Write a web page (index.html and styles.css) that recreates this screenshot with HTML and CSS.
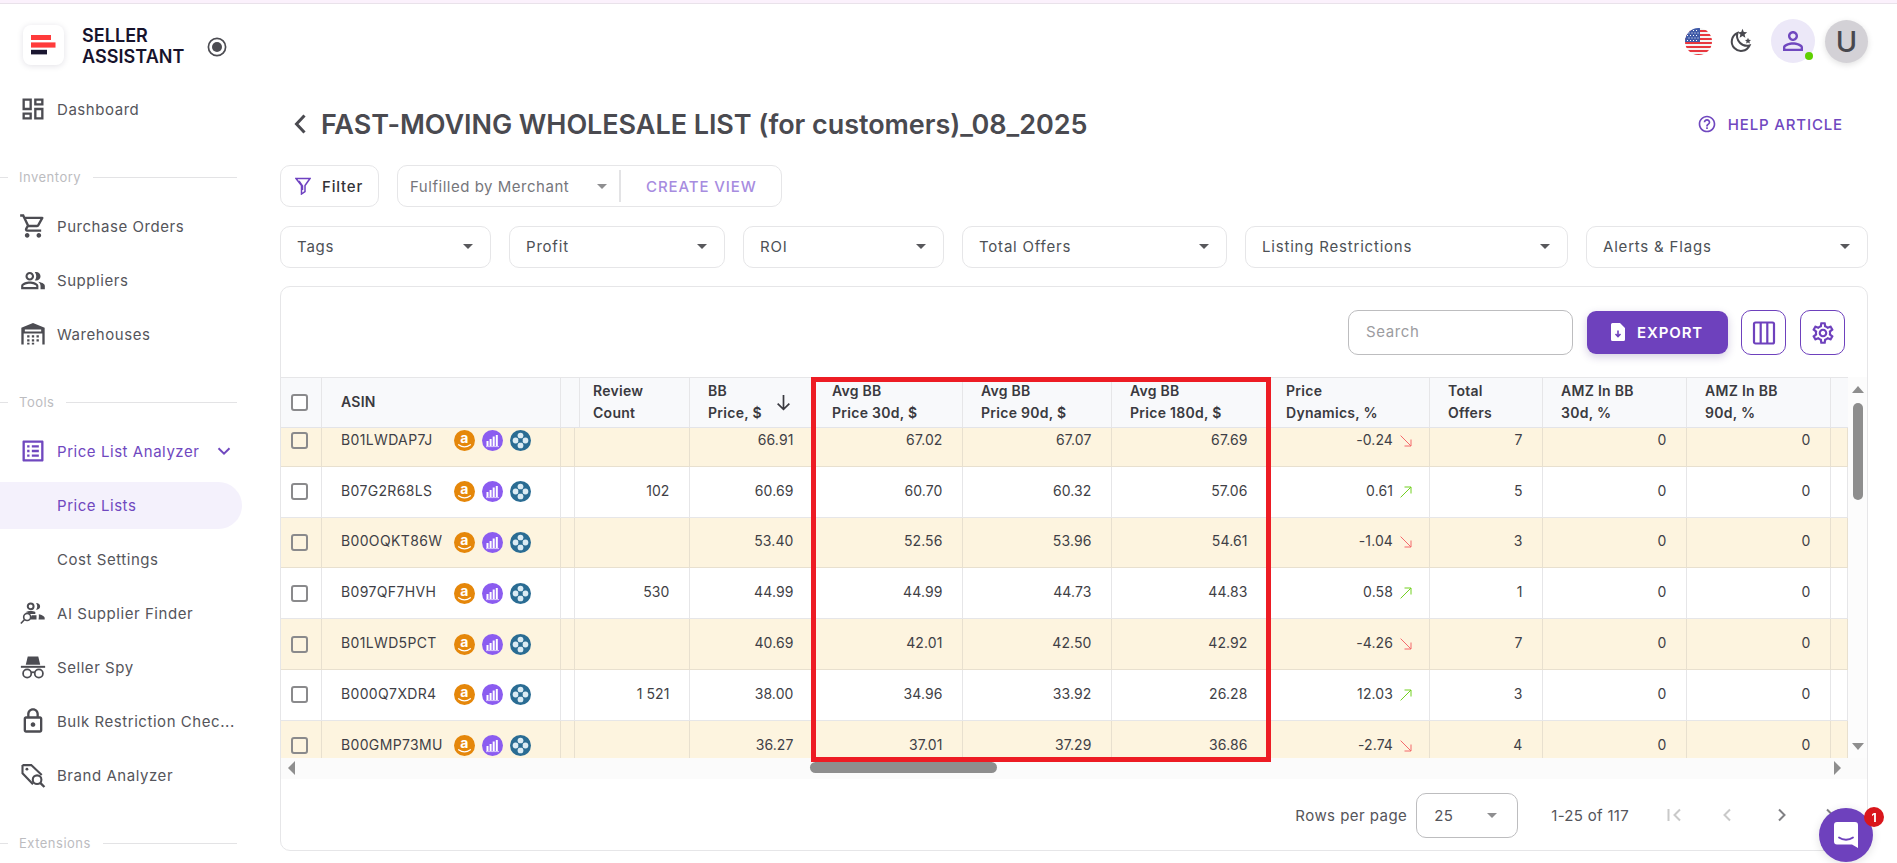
FILE: index.html
```html
<!DOCTYPE html>
<html lang="en">
<head>
<meta charset="utf-8">
<title>Seller Assistant</title>
<link rel="stylesheet" href="styles.css">
</head>
<body>
<svg class="defs" width="0" height="0">
  <symbol id="i-amz" viewBox="0 0 21 21"><circle cx="10.5" cy="10.5" r="10.5" fill="#e5870a"/><text x="10.5" y="12.8" text-anchor="middle" class="amz-a">a</text><path d="M4.6 14.8c3.6 2.6 8.2 2.6 11.8 0" fill="none" stroke="#fff" stroke-width="1.3" stroke-linecap="round"/></symbol>
  <symbol id="i-bars" viewBox="0 0 21 21"><circle cx="10.5" cy="10.5" r="10.5" fill="#8b5cf0"/><path d="M5.5 11v5M8.6 9v7M11.7 6.5V16M14.8 5v11" stroke="#fff" stroke-width="2" fill="none"/><path d="M4 16.6h13" stroke="#d9c9fb" stroke-width="1"/></symbol>
  <symbol id="i-keepa" viewBox="0 0 21 21"><circle cx="10.5" cy="10.5" r="10.5" fill="#2a6c93"/><circle cx="10.5" cy="5.6" r="2.9" fill="#dcecf4"/><circle cx="10.5" cy="15.4" r="2.9" fill="#dcecf4"/><circle cx="5.6" cy="10.5" r="2.9" fill="#dcecf4"/><circle cx="15.4" cy="10.5" r="2.9" fill="#dcecf4"/><circle cx="10.5" cy="10.5" r="2" fill="#2a6c93"/></symbol>
  <symbol id="i-down" viewBox="0 0 12 12"><path d="M.6 .6 11 11M11 4.5V11H4.5" fill="none" stroke="#f4696b" stroke-width="1"/></symbol>
  <symbol id="i-up" viewBox="0 0 12 12"><path d="M.6 11.4 11 1M4.5 1H11v6.5" fill="none" stroke="#72d020" stroke-width="1"/></symbol>
</svg>

<div class="strip"></div>
<div class="app">
  <aside class="sidebar">
    <div class="brand">
      <div class="logo">
        <svg width="41" height="40" viewBox="0 0 41 40"><rect x="8" y="10" width="20" height="5" fill="#ff3b3b"/><rect x="8" y="17.4" width="24.5" height="5.2" fill="#ff3b3b"/><rect x="8" y="24.8" width="16" height="4.6" fill="#1a1630"/></svg>
      </div>
      <div class="brand-name">SELLER<br>ASSISTANT</div>
      <svg class="brand-radio" width="20" height="20" viewBox="0 0 20 20"><circle cx="10" cy="10" r="8.6" fill="none" stroke="#4c4c52" stroke-width="1.7"/><circle cx="10" cy="10" r="5" fill="#4c4c52"/></svg>
    </div>

    <nav class="nav">
      <a class="item"><svg class="ic" viewBox="0 0 24 24"><path d="M19 5v2h-4V5h4M9 5v6H5V5h4m10 8v6h-4v-6h4M9 17v2H5v-2h4M21 3h-8v6h8V3zM11 3H3v10h8V3zm10 8h-8v10h8V11zm-10 4H3v6h8v-6z"/></svg><span>Dashboard</span></a>

      <div class="section"><span>Inventory</span></div>
      <a class="item"><svg class="ic" viewBox="0 0 24 24"><path d="M15.55 13c.75 0 1.41-.41 1.75-1.03l3.58-6.49c.37-.66-.11-1.48-.87-1.48H5.21l-.94-2H1v2h2l3.6 7.59-1.35 2.44C4.52 15.37 5.48 17 7 17h12v-2H7l1.1-2h7.45zM6.16 6h12.15l-2.76 5H8.53L6.16 6zM7 18c-1.1 0-1.99.9-1.99 2S5.9 22 7 22s2-.9 2-2-.9-2-2-2zm10 0c-1.1 0-1.99.9-1.99 2s.89 2 1.99 2 2-.9 2-2-.9-2-2-2z"/></svg><span>Purchase Orders</span></a>
      <a class="item"><svg class="ic" viewBox="-1 -1.5 26 26"><path d="M16.67 13.13C18.04 14.06 19 15.32 19 17v3h4v-3c0-2.18-3.57-3.47-6.33-3.87zM15 12c2.21 0 4-1.79 4-4s-1.79-4-4-4c-.47 0-.91.1-1.33.24C14.5 5.27 15 6.58 15 8s-.5 2.73-1.33 3.76c.42.14.86.24 1.33.24zM9 12c2.21 0 4-1.79 4-4s-1.79-4-4-4-4 1.79-4 4 1.79 4 4 4zm0-6c1.1 0 2 .9 2 2s-.9 2-2 2-2-.9-2-2 .9-2 2-2zM9 13c-2.67 0-8 1.34-8 4v3h16v-3c0-2.66-5.33-4-8-4zm6 5H3v-.99C3.2 16.29 6.3 15 9 15s5.8 1.29 6 2v1z"/></svg><span>Suppliers</span></a>
      <a class="item"><svg class="ic" viewBox="0 0 24 24"><path fill-rule="evenodd" d="M12 2.6 2 6.6V21h2V11.5h16V21h2V6.6zM5 8.2h14v1.6H5z"/><path d="M7 13h2v2H7zm4 0h2v2h-2zm4 0h2v2h-2zM7 16.5h2v2H7zm4 0h2v2h-2zm4 0h2v2h-2zM7 19.6h2V21H7zm4 0h2V21h-2z"/></svg><span>Warehouses</span></a>

      <div class="section"><span>Tools</span></div>
      <a class="item active"><svg class="ic" viewBox="0 0 24 24"><path d="M11 7h6v2h-6zm0 4h6v2h-6zm0 4h6v2h-6zM7 7h2v2H7zm0 4h2v2H7zm0 4h2v2H7zM20.1 3H3.9c-.5 0-.9.4-.9.9v16.2c0 .4.4.9.9.9h16.2c.4 0 .9-.5.9-.9V3.9c0-.5-.5-.9-.9-.9zM19 19H5V5h14v14z"/></svg><span>Price List Analyzer</span><svg class="chev" width="16" height="16" viewBox="0 0 16 16"><path d="M2.5 5.2 8 10.6l5.5-5.4" fill="none" stroke="#7048bf" stroke-width="2"/></svg></a>
      <a class="item sub current"><span>Price Lists</span></a>
      <a class="item sub"><span>Cost Settings</span></a>
      <a class="item"><svg class="ic" viewBox="0 0 24 24"><circle cx="10" cy="6.3" r="2.5" fill="none" stroke="#4c4c52" stroke-width="1.7"/><path d="M14.5 3.5c2.4 0 3.6 1.4 3.6 2.9s-1.2 2.9-3.6 2.9c.8-1 1.1-1.9 1.1-2.9s-.3-1.900-1.100-2.900z"/><circle cx="7" cy="15.4" r="3" fill="none" stroke="#4c4c52" stroke-width="1.4"/><path d="M4.800 17.600 1.600 21" fill="none" stroke="#4c4c52" stroke-width="1.400"/><path d="M5.500 11.300c1.300-.7 3-1 4.500-1s3 .3 4 .9v1.600h-5c-.7-.9-2.200-1.500-3.500-1.500zM11 14h4v3.600h-5.200c.4-1.200.4-2.400 1.200-3.600zM17 13c2.500.5 5 1.700 5 3.200v1.400h-5.200c.3-1.600.3-3.200.2-4.600z"/></svg><span>AI Supplier Finder</span></a>
      <a class="item"><svg class="ic" viewBox="0 0 24 24"><path d="M7.500 3h9l1.700 7H5.800z"/><path d="M1.600 11h20.800v1.700H1.600z"/><circle cx="7" cy="17.500" r="3.500" fill="none" stroke="#4c4c52" stroke-width="1.500"/><circle cx="17" cy="17.500" r="3.500" fill="none" stroke="#4c4c52" stroke-width="1.500"/><path d="M10.500 16.500h3" fill="none" stroke="#4c4c52" stroke-width="1.500"/></svg><span>Seller Spy</span></a>
      <a class="item"><svg class="ic" viewBox="0 0 24 24"><path d="M18 8h-1V6c0-2.760-2.240-5-5-5S7 3.240 7 6v2H6c-1.100 0-2 .9-2 2v10c0 1.100.9 2 2 2h12c1.100 0 2-.9 2-2V10c0-1.100-.9-2-2-2zM9 6c0-1.660 1.340-3 3-3s3 1.340 3 3v2H9zm9 14H6V10h12v10zm-6-3c1.100 0 2-.9 2-2s-.9-2-2-2-2 .9-2 2 .9 2 2 2z"/></svg><span>Bulk Restriction Chec...</span></a>
      <a class="item"><svg class="ic" viewBox="0 0 24 24"><path d="M3 3.500h7.500l9 8.500" fill="none" stroke="#4c4c52" stroke-width="1.800"/><path d="M3 3.500v7l9 9.500" fill="none" stroke="#4c4c52" stroke-width="1.800"/><circle cx="6.800" cy="7" r="1.200"/><circle cx="15.500" cy="16" r="3.700" fill="none" stroke="#4c4c52" stroke-width="1.800"/><path d="m18.200 18.700 3.600 3.600" fill="none" stroke="#4c4c52" stroke-width="2"/></svg><span>Brand Analyzer</span></a>

      <div class="section"><span>Extensions</span></div>
    </nav>
  </aside>

  <main class="main">
    <header class="topbar">
      <svg class="flag" width="27" height="27" viewBox="0 0 27 27">
        <defs><clipPath id="flagclip"><circle cx="13.500" cy="13.500" r="13.500"/></clipPath></defs>
        <g clip-path="url(#flagclip)">
          <rect width="27" height="27" fill="#f4f4f4"/>
          <path d="M0 2h27v2H0zM0 6h27v2H0zM0 10h27v2H0zM0 14h27v2H0zM0 18h27v2H0zM0 22h27v2H0zM0 26h27v2H0z" fill="#e8373e"/>
          <rect width="15" height="14" fill="#3f5aa8"/>
          <path d="M2 2.500h1M5 2.500h1M8 2.500h1M11 2.500h1M3.500 5h1M6.500 5h1M9.500 5h1M12.500 5h1M2 7.500h1M5 7.500h1M8 7.500h1M11 7.500h1M3.500 10h1M6.500 10h1M9.500 10h1M12.500 10h1M2 12.500h1M5 12.500h1M8 12.500h1M11 12.500h1" stroke="#fff" stroke-width="1"/>
        </g>
      </svg>
      <svg class="moon" width="26" height="26" viewBox="0 0 26 26"><path d="M10.500 5A9.300 9.300 0 1 0 22.500 17.500 10 10 0 0 1 10.500 5z" fill="none" stroke="#48484e" stroke-width="2"/><path d="m15.500 .8 1.300 3.200 3.400.3-2.600 2.200.8 3.300-2.900-1.800-2.900 1.800.8-3.300-2.600-2.200 3.400-.3z" fill="#48484e"/><path d="m21 9.800.9 2 2.100.2-1.600 1.400.5 2.100-1.900-1.100-1.900 1.100.5-2.100-1.600-1.400 2.100-.2z" fill="#48484e"/></svg>
      <div class="user">
        <svg width="30" height="30" viewBox="0 0 24 24"><path fill="#7048bf" d="M12 5.900c1.160 0 2.100.94 2.100 2.100s-.94 2.100-2.100 2.100S9.900 9.160 9.900 8s.94-2.100 2.100-2.100m0 9c2.970 0 6.100 1.460 6.100 2.100v1.100H5.900V17c0-.64 3.130-2.100 6.100-2.100M12 4C9.790 4 8 5.790 8 8s1.790 4 4 4 4-1.790 4-4-1.790-4-4-4zm0 9c-2.670 0-8 1.340-8 4v3h16v-3c0-2.660-5.330-4-8-4z"/></svg>
        <span class="dot"></span>
      </div>
      <div class="avatar">U</div>
    </header>

    <div class="title-row">
      <svg class="back" width="14" height="22" viewBox="0 0 14 22"><path d="M11.500 2.500 3.500 11l8 8.500" fill="none" stroke="#4a4a50" stroke-width="3"/></svg>
      <h1 class="title">FAST-MOVING WHOLESALE LIST (for customers)_08_2025</h1>
      <a class="help"><svg width="20" height="20" viewBox="0 0 24 24"><path fill="#7048bf" d="M11 18h2v-2h-2v2zm1-16C6.480 2 2 6.480 2 12s4.480 10 10 10 10-4.480 10-10S17.520 2 12 2zm0 18c-4.410 0-8-3.590-8-8s3.590-8 8-8 8 3.590 8 8-3.590 8-8 8zm0-14c-2.210 0-4 1.790-4 4h2c0-1.100.9-2 2-2s2 .9 2 2c0 2-3 1.750-3 5h2c0-2.250 3-2.500 3-5 0-2.210-1.790-4-4-4z"/></svg><span>HELP ARTICLE</span></a>
    </div>

    <div class="views">
      <button class="filter-btn"><svg width="16" height="18" viewBox="0 0 16 18"><path d="M1 1.500h14L10 8.500V14.500L6.500 17V8.500z M4 4l3.500 5v4" fill="none" stroke="#6f42c1" stroke-width="1.500"/></svg><span>Filter</span></button>
      <div class="view-group">
        <span class="view-name">Fulfilled by Merchant</span>
        <i class="caret caret-soft"></i>
        <i class="view-divider"></i>
        <span class="create">CREATE VIEW</span>
      </div>
    </div>

    <div class="filters">
      <div class="dd"><span>Tags</span><i class="caret"></i></div>
      <div class="dd"><span>Profit</span><i class="caret"></i></div>
      <div class="dd"><span>ROI</span><i class="caret"></i></div>
      <div class="dd"><span>Total Offers</span><i class="caret"></i></div>
      <div class="dd"><span>Listing Restrictions</span><i class="caret"></i></div>
      <div class="dd"><span>Alerts &amp; Flags</span><i class="caret"></i></div>
    </div>

    <section class="card">
      <div class="toolbar">
        <div class="search">Search</div>
        <button class="export"><svg width="14" height="18" viewBox="0 0 14 18"><path d="M1.500 0H9l5 5v11.500a1.500 1.500 0 0 1-1.500 1.500h-11A1.500 1.500 0 0 1 0 16.500v-15A1.500 1.500 0 0 1 1.500 0z" fill="#fff"/><path d="M7 7.500v6M4.500 11 7 13.500 9.500 11" fill="none" stroke="#6e41bd" stroke-width="1.600"/></svg><span>EXPORT</span></button>
        <button class="square"><svg width="24" height="26" viewBox="0 0 24 26"><rect x="2" y="2.500" width="20" height="21" rx="1.500" fill="none" stroke="#6e41bd" stroke-width="2.200"/><path d="M8.700 3v20M15.300 3v20" stroke="#6e41bd" stroke-width="2.200"/></svg></button>
        <button class="square"><svg width="26" height="26" viewBox="0 0 24 24"><path fill="#6e41bd" d="M19.430 12.980c.04-.32.07-.64.07-.98 0-.34-.03-.66-.07-.98l2.110-1.650c.19-.15.24-.42.12-.64l-2-3.460c-.09-.16-.26-.25-.44-.25-.06 0-.12.01-.17.03l-2.490 1c-.52-.4-1.080-.73-1.690-.98l-.38-2.650C14.460 2.180 14.250 2 14 2h-4c-.25 0-.46.18-.49.42l-.38 2.650c-.61.25-1.170.59-1.690.98l-2.490-1c-.06-.02-.12-.03-.18-.03-.17 0-.34.09-.43.25l-2 3.460c-.13.22-.07.49.12.64l2.110 1.650c-.04.32-.07.65-.07.98 0 .33.03.66.07.98l-2.110 1.650c-.19.15-.24.42-.12.64l2 3.460c.09.16.26.25.44.25.06 0 .12-.01.17-.03l2.490-1c.52.4 1.080.73 1.690.98l.38 2.650c.03.24.24.42.49.42h4c.25 0 .46-.18.49-.42l.38-2.650c.61-.25 1.170-.59 1.690-.98l2.490 1c.06.02.12.03.18.03.17 0 .34-.09.43-.25l2-3.460c.12-.22.07-.49-.12-.64l-2.110-1.650zm-1.980-1.710c.04.31.05.52.05.73 0 .21-.02.43-.05.73l-.14 1.130.89.7 1.080.84-.7 1.210-1.270-.51-1.040-.42-.9.68c-.43.32-.84.56-1.250.73l-1.060.43-.16 1.130-.2 1.350h-1.400l-.19-1.350-.16-1.130-1.060-.43c-.43-.18-.83-.41-1.230-.71l-.91-.7-1.060.43-1.270.51-.7-1.210 1.080-.84.89-.7-.14-1.130c-.03-.31-.05-.54-.05-.74s.02-.43.05-.73l.14-1.130-.89-.7-1.080-.84.7-1.210 1.270.51 1.040.42.9-.68c.43-.32.84-.56 1.250-.73l1.060-.43.16-1.130.2-1.350h1.390l.19 1.350.16 1.130 1.060.43c.43.18.83.41 1.230.71l.91.7 1.060-.43 1.270-.51.7 1.210-1.070.85-.89.7.14 1.130zM12 8c-2.210 0-4 1.790-4 4s1.790 4 4 4 4-1.790 4-4-1.790-4-4-4zm0 6c-1.100 0-2-.9-2-2s.9-2 2-2 2 .9 2 2-.9 2-2 2z"/></svg></button>
      </div>

      <div class="table-wrap">
        <div class="table">
          <div class="row head">
            <div class="c cc"><i class="cb"></i></div>
            <div class="c">ASIN</div>
            <div class="c"></div>
            <div class="c">Review<br>Count</div>
            <div class="c sort">BB<br>Price, $<svg class="sort-arrow" width="17" height="17" viewBox="0 0 16 16"><path d="M8 1v13.500M2.500 9 8 14.500 13.500 9" fill="none" stroke="#3a3a40" stroke-width="1.600"/></svg></div>
            <div class="c">Avg BB<br>Price 30d, $</div>
            <div class="c">Avg BB<br>Price 90d, $</div>
            <div class="c">Avg BB<br>Price 180d, $</div>
            <div class="c">Price<br>Dynamics, %</div>
            <div class="c">Total<br>Offers</div>
            <div class="c">AMZ In BB<br>30d, %</div>
            <div class="c">AMZ In BB<br>90d, %</div>
            <div class="c"></div>
          </div>
          <div class="rows">
            <div class="row tint first">
              <div class="c cc"><i class="cb"></i></div><div class="c asin"><span>B01LWDAP7J</span><svg><use href="#i-amz"/></svg><svg><use href="#i-bars"/></svg><svg><use href="#i-keepa"/></svg></div><div class="c"></div>
              <div class="c n"></div><div class="c n">66.91</div><div class="c n">67.02</div><div class="c n">67.07</div><div class="c n">67.69</div>
              <div class="c n dyn">-0.24<svg class="tr"><use href="#i-down"/></svg></div><div class="c n">7</div><div class="c n">0</div><div class="c n">0</div><div class="c"></div>
            </div>
            <div class="row">
              <div class="c cc"><i class="cb"></i></div><div class="c asin"><span>B07G2R68LS</span><svg><use href="#i-amz"/></svg><svg><use href="#i-bars"/></svg><svg><use href="#i-keepa"/></svg></div><div class="c"></div>
              <div class="c n">102</div><div class="c n">60.69</div><div class="c n">60.70</div><div class="c n">60.32</div><div class="c n">57.06</div>
              <div class="c n dyn">0.61<svg class="tr"><use href="#i-up"/></svg></div><div class="c n">5</div><div class="c n">0</div><div class="c n">0</div><div class="c"></div>
            </div>
            <div class="row tint">
              <div class="c cc"><i class="cb"></i></div><div class="c asin"><span>B00OQKT86W</span><svg><use href="#i-amz"/></svg><svg><use href="#i-bars"/></svg><svg><use href="#i-keepa"/></svg></div><div class="c"></div>
              <div class="c n"></div><div class="c n">53.40</div><div class="c n">52.56</div><div class="c n">53.96</div><div class="c n">54.61</div>
              <div class="c n dyn">-1.04<svg class="tr"><use href="#i-down"/></svg></div><div class="c n">3</div><div class="c n">0</div><div class="c n">0</div><div class="c"></div>
            </div>
            <div class="row">
              <div class="c cc"><i class="cb"></i></div><div class="c asin"><span>B097QF7HVH</span><svg><use href="#i-amz"/></svg><svg><use href="#i-bars"/></svg><svg><use href="#i-keepa"/></svg></div><div class="c"></div>
              <div class="c n">530</div><div class="c n">44.99</div><div class="c n">44.99</div><div class="c n">44.73</div><div class="c n">44.83</div>
              <div class="c n dyn">0.58<svg class="tr"><use href="#i-up"/></svg></div><div class="c n">1</div><div class="c n">0</div><div class="c n">0</div><div class="c"></div>
            </div>
            <div class="row tint">
              <div class="c cc"><i class="cb"></i></div><div class="c asin"><span>B01LWD5PCT</span><svg><use href="#i-amz"/></svg><svg><use href="#i-bars"/></svg><svg><use href="#i-keepa"/></svg></div><div class="c"></div>
              <div class="c n"></div><div class="c n">40.69</div><div class="c n">42.01</div><div class="c n">42.50</div><div class="c n">42.92</div>
              <div class="c n dyn">-4.26<svg class="tr"><use href="#i-down"/></svg></div><div class="c n">7</div><div class="c n">0</div><div class="c n">0</div><div class="c"></div>
            </div>
            <div class="row">
              <div class="c cc"><i class="cb"></i></div><div class="c asin"><span>B000Q7XDR4</span><svg><use href="#i-amz"/></svg><svg><use href="#i-bars"/></svg><svg><use href="#i-keepa"/></svg></div><div class="c"></div>
              <div class="c n">1 521</div><div class="c n">38.00</div><div class="c n">34.96</div><div class="c n">33.92</div><div class="c n">26.28</div>
              <div class="c n dyn">12.03<svg class="tr"><use href="#i-up"/></svg></div><div class="c n">3</div><div class="c n">0</div><div class="c n">0</div><div class="c"></div>
            </div>
            <div class="row tint">
              <div class="c cc"><i class="cb"></i></div><div class="c asin"><span>B00GMP73MU</span><svg><use href="#i-amz"/></svg><svg><use href="#i-bars"/></svg><svg><use href="#i-keepa"/></svg></div><div class="c"></div>
              <div class="c n"></div><div class="c n">36.27</div><div class="c n">37.01</div><div class="c n">37.29</div><div class="c n">36.86</div>
              <div class="c n dyn">-2.74<svg class="tr"><use href="#i-down"/></svg></div><div class="c n">4</div><div class="c n">0</div><div class="c n">0</div><div class="c"></div>
            </div>
          </div>
        </div>
        <div class="vscroll">
          <i class="tri-up"></i>
          <i class="vthumb"></i>
          <i class="tri-down"></i>
        </div>
      </div>
      <div class="hscroll">
        <i class="tri-left"></i>
        <i class="hthumb"></i>
        <i class="tri-right"></i>
      </div>

      <div class="pager">
        <span class="pg-label">Rows per page</span>
        <div class="pg-select"><span>25</span><i class="caret caret-soft"></i></div>
        <span class="pg-range">1-25 of 117</span>
        <svg class="pg-ic pg-first" width="18" height="18" viewBox="0 0 18 18"><path d="M2.500 3v12M14 3.500 8.500 9l5.500 5.500" fill="none" stroke="#c9c9c9" stroke-width="2"/></svg>
        <svg class="pg-ic pg-prev" width="18" height="18" viewBox="0 0 18 18"><path d="M12 3.500 6.500 9l5.500 5.500" fill="none" stroke="#c9c9c9" stroke-width="2"/></svg>
        <svg class="pg-ic pg-next" width="18" height="18" viewBox="0 0 18 18"><path d="M6 3.500 11.500 9 6 14.500" fill="none" stroke="#808084" stroke-width="2"/></svg>
        <svg class="pg-ic pg-last" width="18" height="18" viewBox="0 0 18 18"><path d="M4 3.500 9.500 9 4 14.500M15.500 3v12" fill="none" stroke="#808084" stroke-width="2"/></svg>
      </div>

      <div class="highlight"></div>
    </section>
  </main>
</div>

<div class="chat">
  <svg width="26" height="28" viewBox="0 0 26 28"><path d="M4 1h18a3 3 0 0 1 3 3v23l-6-3.500H4a3 3 0 0 1-3-3V4a3 3 0 0 1 3-3z" fill="#fff"/><path d="M6 16.500c4 3 10 3 14 0" fill="none" stroke="#6e41bd" stroke-width="1.800" stroke-linecap="round"/></svg>
  <span class="badge">1</span>
</div>
</body>
</html>
```
FILE: styles.css
```css
* { box-sizing: border-box; }
html, body { margin: 0; height: 863px; overflow: hidden; background: #fff; }
body { font-family: Inter, "Liberation Sans", sans-serif; color: #3f3f46; position: relative; }
.defs { display: none; }
.amz-a { font: 700 14px Inter, sans-serif; fill: #fff; }
i { display: block; font-style: normal; }
button { font-family: inherit; cursor: pointer; background: none; padding: 0; }

.strip { height: 4px; background: #fbf1fc; border-bottom: 1px solid #e9e2ea; }
.app { display: flex; height: 859px; }

/* sidebar */
.sidebar { width: 242px; flex: none; }
.brand { height: 78px; padding: 21px 0 0 23px; display: flex; align-items: flex-start; }
.logo { width: 41px; height: 40px; background: #fff; border-radius: 8px; box-shadow: 0 1px 6px rgba(30, 20, 60, .13); flex: none; }
.logo svg { display: block; }
.brand-name { margin: 0 0 0 18px; font-size: 18px; line-height: 21px; font-weight: 600; color: #17132c; letter-spacing: .05px; width: 126px; }
.brand-radio { margin: 12px 0 0 -1px; flex: none; }
.nav { display: flex; flex-direction: column; }
.item { height: 54px; flex: none; display: flex; align-items: center; padding-left: 18.5px; font-size: 15px; color: #55555b; letter-spacing: .55px; white-space: nowrap; }
.ic { width: 28px; height: 28px; fill: #4c4c52; flex: none; margin-right: 10.5px; }
.item.active { color: #7048bf; }
.item.active .ic { fill: #7048bf; }
.chev { margin-left: 17px; }
.item.sub { padding-left: 57px; }
.item.current { height: 47px; margin: 3.5px 0; color: #7048bf; background: #f4f1fc; border-radius: 0 24px 24px 0; }
.section { margin: 31px 0 12px; height: 20px; display: flex; align-items: center; padding-right: 5px; font-size: 13px; color: #bcbcbf; letter-spacing: .5px; }
.section::before { content: ""; width: 8px; height: 1px; background: #e3e3e5; margin-right: 11px; }
.section::after { content: ""; flex: 1; height: 1px; background: #e3e3e5; margin-left: 12px; }

/* main */
.main { flex: 1; min-width: 0; padding: 15px 29px 0 38px; }
.topbar { height: 44px; display: flex; align-items: center; justify-content: flex-end; }
.moon { margin-left: 15px; }
.user { position: relative; width: 44px; height: 44px; margin-left: 18px; border-radius: 50%; background: #ece8f8; display: flex; align-items: center; justify-content: center; }
.dot { position: absolute; right: 2px; bottom: 3px; width: 8px; height: 8px; border-radius: 50%; background: #5fd000; }
.avatar { width: 43px; height: 43px; margin-left: 10px; border-radius: 50%; background: #d3d1d6; box-shadow: 0 2px 6px rgba(0, 0, 0, .12); display: flex; align-items: center; justify-content: center; font-size: 29px; font-weight: 500; color: #48484e; }

.title-row { height: 44px; margin-top: 39px; display: flex; align-items: center; padding: 0 25px 0 13px; }
.back { flex: none; margin-right: 14px; }
.title { margin: 0; flex: 1; font-size: 27px; font-weight: 600; color: #4a4a50; white-space: nowrap; letter-spacing: -.05px; }
.help { display: flex; align-items: center; gap: 11px; font-size: 15px; font-weight: 500; color: #7048bf; letter-spacing: .85px; }

.views { display: flex; margin-top: 19px; height: 42px; gap: 18px; }
.filter-btn { width: 99px; border: 1px solid #e6e6e8; border-radius: 10px; display: flex; align-items: center; padding-left: 14px; gap: 11px; font-size: 15px; font-weight: 500; color: #333338; letter-spacing: .8px; }
.view-group { width: 385px; border: 1px solid #e6e6e8; border-radius: 10px; display: flex; align-items: center; padding-left: 12px; font-size: 15px; color: #76767b; letter-spacing: .52px; }
.view-name { width: 187px; white-space: nowrap; }
.view-divider { width: 2px; height: 32px; background: #e3e3e5; margin-left: 12px; }
.create { margin-left: 25px; font-weight: 500; color: #a78cdf; letter-spacing: .9px; }

.caret { width: 0; height: 0; border-style: solid; border-width: 5px 5px 0; border-color: #58585c transparent transparent; flex: none; }
.caret-soft { border-color: #8e8e90 transparent transparent; }

.filters { display: grid; grid-template-columns: 211px 216px 201px 265px 323px 282px; column-gap: 18px; margin-top: 19px; height: 42px; }
.dd { border: 1px solid #e6e6e8; border-radius: 10px; display: flex; align-items: center; justify-content: space-between; padding: 0 17px 1px 16px; font-size: 15px; color: #4d5156; letter-spacing: .8px; }

.card { position: relative; margin-top: 18px; height: 565px; border: 1px solid #e6e6e8; border-radius: 10px; background: #fff; }
.toolbar { height: 90px; display: flex; align-items: flex-start; justify-content: flex-end; padding: 23px 22px 0 0; }
.search { width: 225px; height: 45px; border: 1px solid #bdbdbf; border-radius: 10px; padding: 0 0 2px 17px; display: flex; align-items: center; font-size: 15px; color: #9c9c9f; letter-spacing: .6px; margin-right: 14px; }
.export { width: 141px; height: 43px; margin: 1px 13px 0 0; border: 0; border-radius: 9px; background: #6e41bd; box-shadow: 0 3px 8px rgba(60, 30, 120, .22); color: #fff; font-size: 15px; font-weight: 600; letter-spacing: .9px; display: flex; align-items: center; padding: 0 0 1px 24px; gap: 12px; }
.square { width: 45px; height: 45px; border: 1px solid #6e41bd; border-radius: 10px; display: flex; align-items: center; justify-content: center; margin-right: 14px; }
.square:last-child { margin-right: 0; }

.table-wrap { display: flex; height: 381px; }
.table { width: 1567px; flex: none; overflow: hidden; }
.row { display: grid; grid-template-columns: 41px 239px 14px 115px 124px 149px 149px 156px 162px 113px 144px 144px 17px; height: 50.8px; background: #fff; border-bottom: 1px solid #e6e6e8; }
.c { border-right: 1px solid #e6e6e8; display: flex; align-items: center; min-width: 0; font-size: 14px; white-space: nowrap; color: #3f3f46; letter-spacing: .1px; }
.c.cc { justify-content: center; padding-right: 3px; }
.cb { width: 17px; height: 17px; border: 2px solid #8a8a8c; border-radius: 3px; background: #fff; }
.n { justify-content: flex-end; padding: 0 19.500px 3px 0; }
.asin { padding-left: 19px; letter-spacing: .35px; }
.asin span { width: 113px; flex: none; padding-bottom: 3px; }
.asin svg { width: 21px; height: 21px; flex: none; margin-right: 7px; }
.dyn { padding-right: 17px; }
.tr { width: 12px; height: 12px; margin: 3px 0 0 7px; flex: none; }

.head { height: 51px; background: #f8f9fb; border-top: 1px solid #e6e6e8; border-bottom: 1px solid #e3e4e8; }
.head .c { display: block; padding: 2px 0 0 18px; font-size: 14px; font-weight: 600; line-height: 22px; color: #3a3a40; position: relative; letter-spacing: .28px; }
.head .c.cc { display: flex; padding: 0 3px 0 0; align-items: center; }
.head .c:nth-child(2) { display: flex; align-items: center; padding: 0 0 1px 19px; }
.sort-arrow { position: absolute; right: 21px; top: 16px; }

.rows { height: 329.500px; overflow: hidden; }
.first { margin-top: -12px; }
.tint { background: #fdf4df; border-bottom-color: #e8e0cf; }
.tint .c { border-right-color: #e8e0cf; }
.tint .cb { background: #fdf4df; }

.vscroll { width: 19px; background: #fcfcfc; display: flex; flex-direction: column; align-items: center; padding-top: 9px; }
.tri-up { border-style: solid; border-width: 0 6.500px 7px; border-color: transparent transparent #8e8e8e; }
.tri-down { border-style: solid; border-width: 7px 6.500px 0; border-color: #8e8e8e transparent transparent; margin-top: 243px; }
.vthumb { width: 10px; height: 97px; margin-top: 10px; border-radius: 5px; background: #8e8e8e; }
.hscroll { height: 21px; background: #fbfbfb; display: flex; align-items: center; padding: 0 0 2px 7px; }
.tri-left { border-style: solid; border-width: 7px 7px 7px 0; border-color: transparent #8e8e8e transparent transparent; }
.tri-right { border-style: solid; border-width: 7px 0 7px 7px; border-color: transparent transparent transparent #8e8e8e; margin-left: 837px; }
.hthumb { width: 187px; height: 11px; margin-left: 515px; border-radius: 5.500px; background: #8e8e8e; }

.pager { height: 72px; display: flex; align-items: center; justify-content: flex-end; padding-right: 26px; font-size: 15px; color: #55555b; letter-spacing: .3px; }
.pg-label { letter-spacing: .45px; }
.pg-select { width: 102px; height: 45px; margin-left: 9px; border: 1px solid #bdbdbf; border-radius: 10px; display: flex; align-items: center; justify-content: space-between; padding: 0 20px 0 17px; }
.pg-range { margin-left: 33px; }
.pg-first { margin-left: 37px; }
.pg-prev { margin-left: 34px; }
.pg-next { margin-left: 37px; }
.pg-last { margin-left: 32px; }

.highlight { position: absolute; left: 530px; top: 90px; width: 460px; height: 385px; border: 5px solid #ed1c24; pointer-events: none; }

.chat { position: fixed; left: 1819px; top: 808px; width: 54px; height: 54px; border-radius: 50%; background: #6e41bd; box-shadow: 0 2px 10px rgba(0, 0, 0, .12); display: flex; align-items: center; justify-content: center; }
.badge { position: absolute; left: 45px; top: -1px; width: 20px; height: 20px; border-radius: 50%; background: #d9161c; color: #fff; font-size: 12px; font-weight: 700; display: flex; align-items: center; justify-content: center; }
```
